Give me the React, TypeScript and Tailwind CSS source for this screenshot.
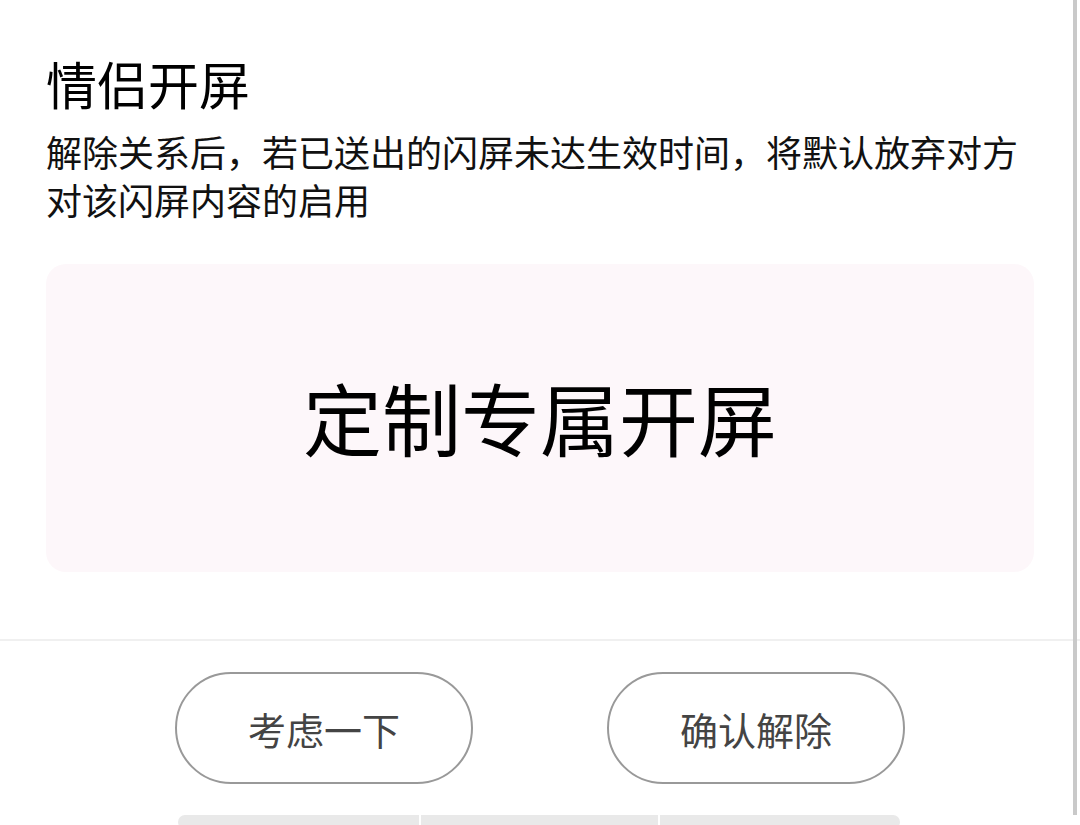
import React from 'react';

const font = { fontFamily: '"Noto Sans CJK SC", "Noto Sans", sans-serif' };

export default function App() {
  return (
    <div className="relative w-[1080px] h-[825px] overflow-hidden bg-white" style={font}>
      {/* top content */}
      <div className="px-[46px] pt-[53px] pb-[67px]">
        <h1 className="text-[51px] leading-[60px] text-black">情侣开屏</h1>
        <p className="mt-[14px] text-[36px] leading-[48px] text-[#111]">
          解除关系后，若已送出的闪屏未达生效时间，将默认放弃对方对该闪屏内容的启用
        </p>
        <div className="mt-[41px] h-[308px] rounded-[20px] bg-[#fdf7fa] flex items-center justify-center">
          <span className="text-[79px] leading-none text-black pb-[4px]">定制专属开屏</span>
        </div>
      </div>

      {/* divider */}
      <div className="h-[2px] bg-[#f0f0f0]" />

      {/* actions */}
      <div className="flex justify-center gap-[134px] pt-[31px]">
        <button className="w-[298px] h-[112px] rounded-full border-[2.5px] border-[#999] text-[38px] text-[#444] flex items-center justify-center">
          考虑一下
        </button>
        <button className="w-[298px] h-[112px] rounded-full border-[2.5px] border-[#999] text-[38px] text-[#444] flex items-center justify-center">
          确认解除
        </button>
      </div>

      {/* bottom strip, partially visible */}
      <div className="flex gap-[2px] ml-[178px] mt-[31px] w-[722px] h-[14px]">
        <div className="flex-1 bg-[#e9e9e9] rounded-l-full" />
        <div className="w-[237px] bg-[#e9e9e9]" />
        <div className="flex-1 bg-[#e9e9e9] rounded-r-full" />
      </div>

      {/* scrollbar */}
      <div className="absolute top-0 left-[1073px] w-[4px] h-[815px] bg-[#c9c9c9]" />
    </div>
  );
}
